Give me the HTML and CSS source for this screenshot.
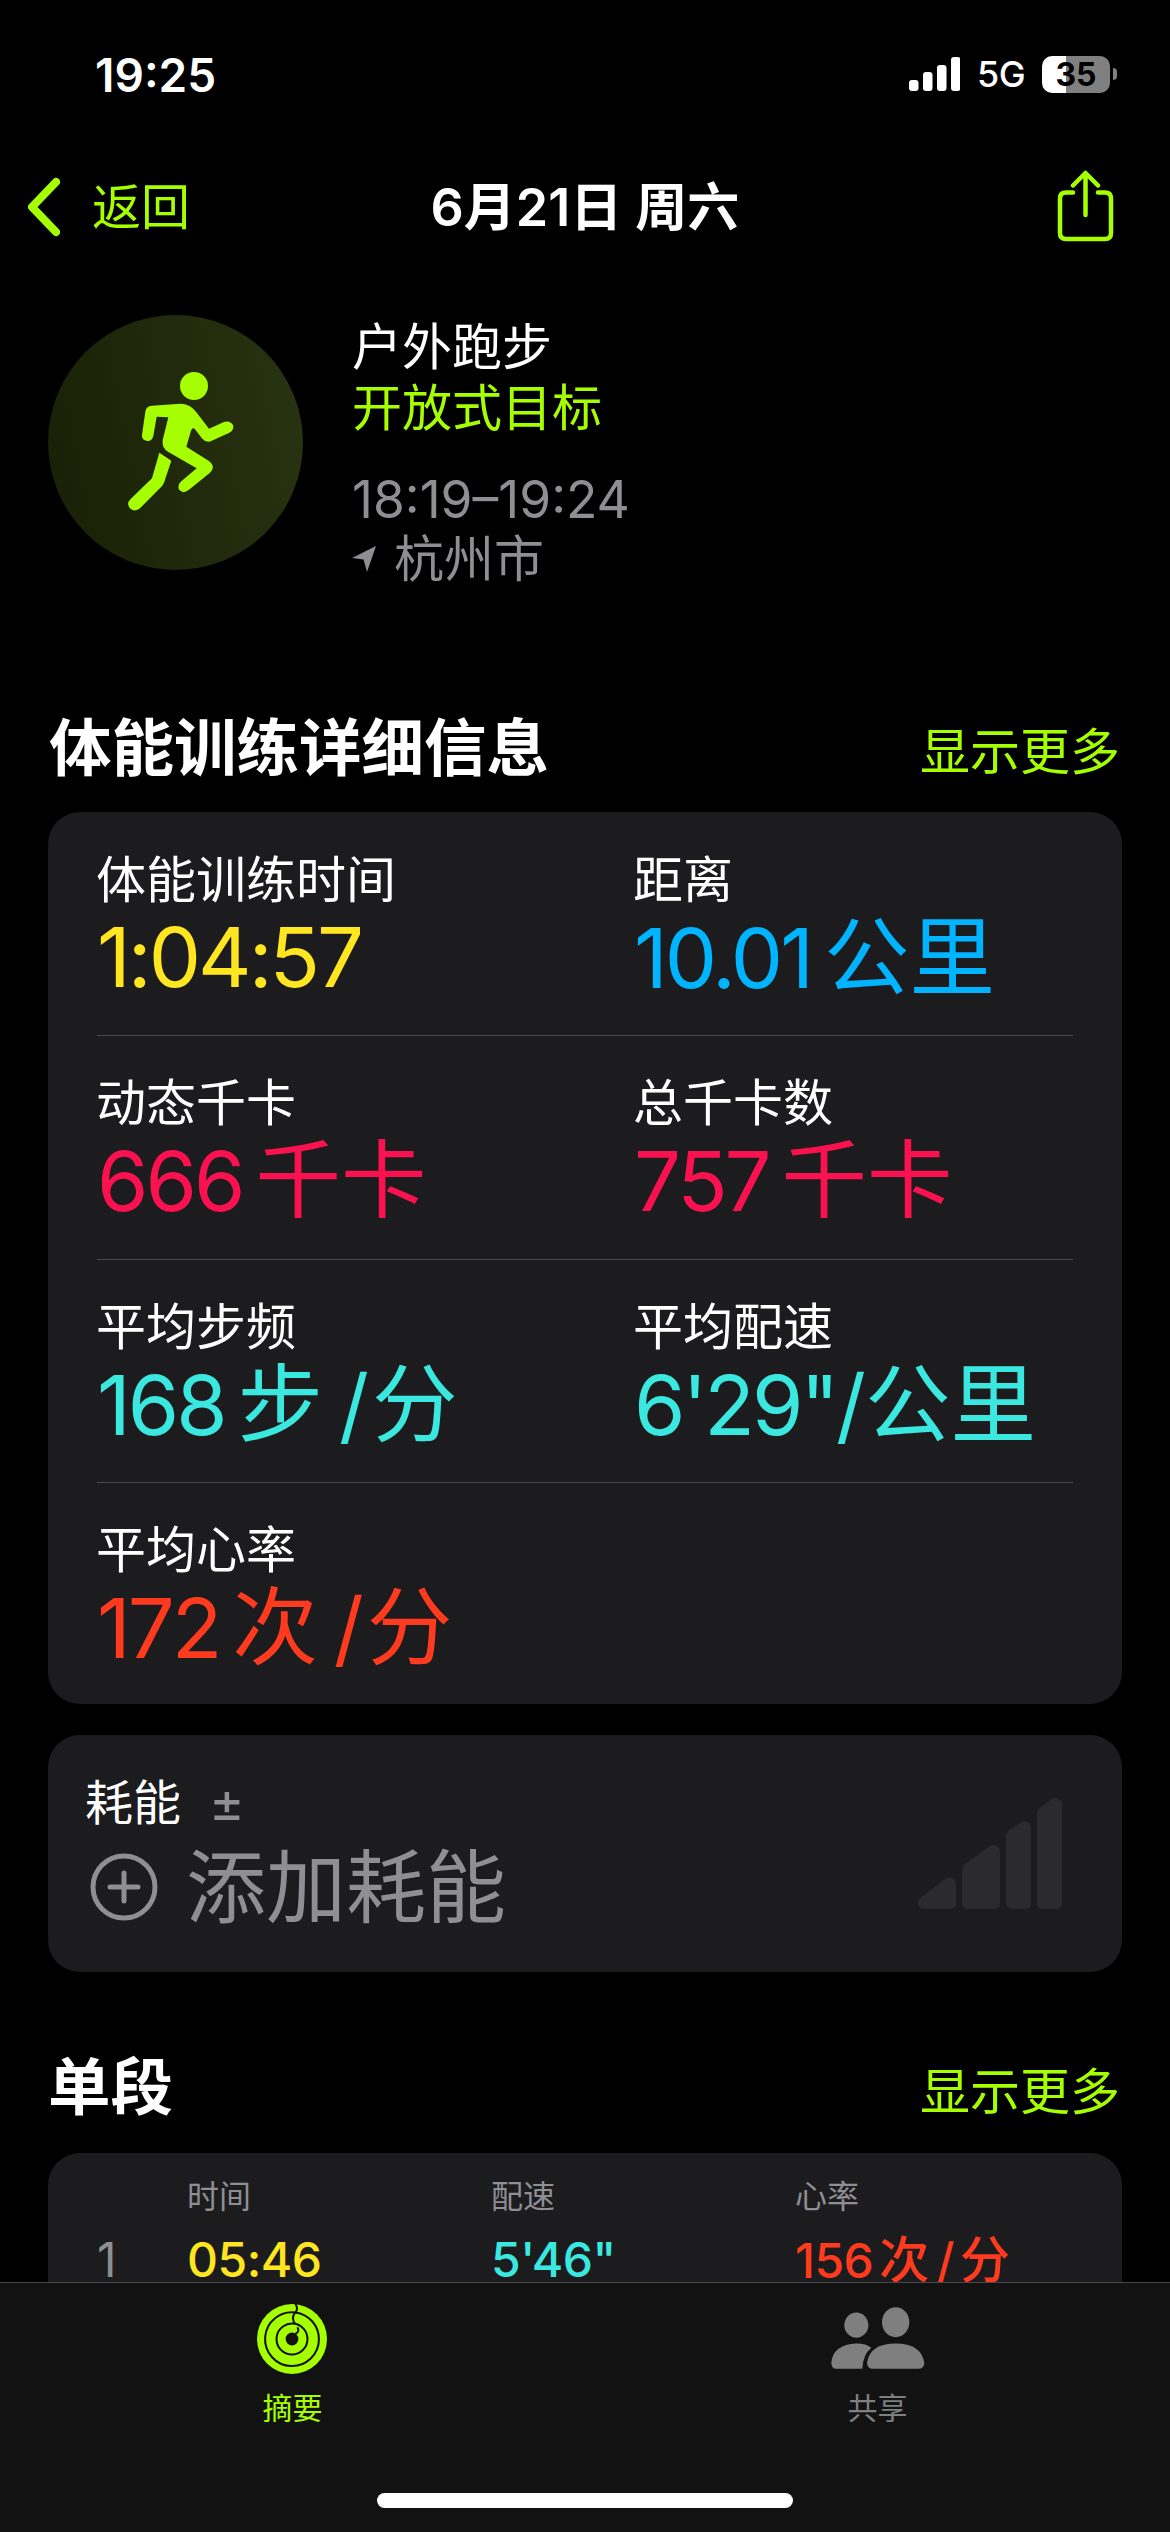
FILE: index.html
```html
<!DOCTYPE html>
<html lang="zh-CN">
<head>
<meta charset="utf-8">
<title>体能训练详细信息</title>
<link rel="stylesheet" href="styles.css">
</head>
<body>
<div class="page">
  <header class="status">
    <span class="clock">19:25</span>
    <div class="status-right">
      <svg class="signal" viewBox="0 0 51 34"><rect x="0" y="23" width="9.500" height="11" rx="3"/><rect x="14" y="15" width="9.500" height="19" rx="3"/><rect x="28" y="8" width="9.500" height="26" rx="3"/><rect x="42" y="0" width="9.500" height="34" rx="3"/></svg>
      <span class="net">5G</span>
      <div class="battery"><span class="battery-body">35</span><span class="battery-nub"></span></div>
    </div>
  </header>

  <nav class="nav">
    <div class="back">
      <svg class="chevron" viewBox="0 0 32 60"><path d="M28 5 L4 30 L28 55"/></svg>
      <span class="back-text">返回</span>
    </div>
    <div class="nav-title">6月21日 周六</div>
    <svg class="share" viewBox="0 0 59 75"><path d="M17 22.500 H10 Q4 22.500 4 28.500 V63 Q4 69 10 69 H49 Q55 69 55 63 V28.500 Q55 22.500 49 22.500 H42"/><path d="M29.500 45 V4 M17 15.500 L29.500 3 L42 15.500"/></svg>
  </nav>

  <section class="hero">
    <svg class="badge" viewBox="24 45 765 765">
      <defs><linearGradient id="badgeFill" x1="0" y1="0.5" x2="1" y2="0.3"><stop offset="0" stop-color="#1a2106"/><stop offset="1" stop-color="#283312"/></linearGradient></defs>
      <circle cx="406.500" cy="427.500" r="382.500" fill="url(#badgeFill)"/>
      <circle class="lime-fill" cx="462" cy="258" r="42"/>
      <path class="lime-fill" d="M306 405 L316 335 Q318 318 336 317 L420 311 Q450 311 468 335 L507 386 L552 366 Q570 360 579 375 Q584 390 568 398 L512 424 Q497 428 487 416 L465 388 Q458 380 453 392 L439 440 L508 484 Q528 500 510 518 L446 570 Q430 583 418 570 Q410 556 424 544 L470 505 L385 456 Q365 445 368 420 L385 352 L350 350 L340 408 Q336 424 322 423 Q304 420 306 405 Z"/>
      <path class="lime-fill" d="M358 458 L394 482 L372 548 Q368 558 358 566 L303 622 Q287 638 271 626 Q257 612 272 597 L336 535 Z"/>
    </svg>
    <div class="hero-text">
      <div class="hero-title">户外跑步</div>
      <div class="hero-goal">开放式目标</div>
      <div class="hero-time">18:19–19:24</div>
      <div class="hero-place">
        <svg class="pin" viewBox="0 0 24 26"><path d="M24 0 L15 26 L11.500 13.500 L0 12 Z"/></svg>
        <span>杭州市</span>
      </div>
    </div>
  </section>

  <div class="section-head">
    <h2>体能训练详细信息</h2>
    <span class="more">显示更多</span>
  </div>

  <section class="card metrics">
    <div class="metric"><div class="metric-label">体能训练时间</div><div class="metric-value yellow">1:04:57</div></div>
    <div class="metric"><div class="metric-label">距离</div><div class="metric-value blue">10.01<span class="unit">公里</span></div></div>
    <div class="metric"><div class="metric-label">动态千卡</div><div class="metric-value pink">666<span class="unit">千卡</span></div></div>
    <div class="metric"><div class="metric-label">总千卡数</div><div class="metric-value pink">757<span class="unit">千卡</span></div></div>
    <div class="metric"><div class="metric-label">平均步频</div><div class="metric-value cyan">168<span class="unit">步</span><span class="sep">/</span><span class="unit">分</span></div></div>
    <div class="metric"><div class="metric-label">平均配速</div><div class="metric-value cyan">6'29"<span class="sep sep-tight">/</span><span class="unit">公里</span></div></div>
    <div class="metric"><div class="metric-label">平均心率</div><div class="metric-value red">172<span class="unit">次</span><span class="sep">/</span><span class="unit">分</span></div></div>
    <div class="metric"></div>
  </section>

  <section class="card effort">
    <div class="effort-main">
      <div class="effort-label"><span>耗能</span><span class="plusminus">±</span></div>
      <div class="effort-add">
        <svg class="add" viewBox="0 0 68 68"><circle cx="34" cy="34" r="31"/><path d="M34 20 V48 M20 34 H48"/></svg>
        <span>添加耗能</span>
      </div>
    </div>
    <svg class="effort-bars" viewBox="0 0 540 420">
      <path d="M54 371 Q54 358 66 350 L135 298 Q150 288 160 296 Q168 302 168 316 V370 Q168 386 152 386 H70 Q54 386 54 371 Z"/>
      <path d="M186 272 Q186 260 196 252 L268 199 Q280 191 291 198 Q300 204 300 216 V368 Q300 386 282 386 H204 Q186 386 186 368 Z"/>
      <path d="M318 170 Q318 158 328 150 L362 128 Q375 120 385 128 Q393 134 393 145 V368 Q393 386 375 386 H336 Q318 386 318 368 Z"/>
      <path d="M411 102 Q411 90 421 83 L455 58 Q468 50 478 58 Q486 64 486 75 V368 Q486 386 468 386 H429 Q411 386 411 368 Z"/>
    </svg>
  </section>

  <div class="section-head section-head-second">
    <h2>单段</h2>
    <span class="more">显示更多</span>
  </div>

  <section class="card laps">
    <div class="laps-grid">
      <span></span>
      <span class="lap-head">时间</span>
      <span class="lap-head">配速</span>
      <span class="lap-head">心率</span>
      <span class="lap-num">1</span>
      <span class="lap-value yellow">05:46</span>
      <span class="lap-value cyan">5'46"</span>
      <span class="lap-value red">156<span class="lap-unit">次</span><span class="lap-sep">/</span><span class="lap-unit">分</span></span>
    </div>
  </section>

  <footer class="tabbar">
    <div class="tabs">
      <div class="tab tab-active">
        <svg class="rings" viewBox="168 74 208 208">
          <circle class="lime-fill" cx="272" cy="178" r="104"/>
          <g class="ring-gap">
            <path d="M282 99 A80 80 0 1 0 352 178 A80 80 0 0 0 282 99"/>
            <path d="M281 133 A46 46 0 1 0 318 178 A46 46 0 0 0 281 133"/>
            <path d="M282 74 Q292 88 282 99 M282 99 Q268 114 281 133"/>
            <path d="M288 143 Q296 155 282 163"/>
          </g>
          <circle cx="272" cy="178" r="19" class="ring-hole"/>
        </svg>
        <span>摘要</span>
      </div>
      <div class="tab">
        <svg class="people" viewBox="80 80 300 200">
          <ellipse cx="165" cy="137" rx="36" ry="38"/>
          <ellipse cx="283" cy="128" rx="41" ry="45"/>
          <path d="M90 250 Q95 195 165 192 Q195 192 210 205 Q185 225 183 268 L105 268 Q90 268 90 250 Z"/>
          <path d="M197 250 Q205 192 283 192 Q360 192 369 250 Q369 268 350 268 L215 268 Q197 268 197 250 Z"/>
        </svg>
        <span>共享</span>
      </div>
    </div>
    <div class="home-indicator"></div>
  </footer>
</div>
</body>
</html>
```

FILE: styles.css
```css
* { box-sizing: border-box; }
html, body { margin: 0; padding: 0; background: #000; }
body { font-family: Inter, "Noto Sans CJK SC", sans-serif; color: #fff; }

.page { position: relative; width: 1170px; height: 2532px; overflow: hidden; background: #000; padding: 0 48px; }

.lime-fill { fill: #a6ff00; }
.yellow { color: #ffe620; }
.blue { color: #00b4ff; }
.pink { color: #fa114f; }
.cyan { color: #3ae8e0; }
.red { color: #ff3b1f; }

/* status bar */
.status { height: 148px; display: flex; justify-content: space-between; align-items: flex-start; padding: 48px 5px 0 47px; }
.clock { font-size: 46px; font-weight: 600; line-height: 54px; }
.status-right { display: flex; align-items: center; height: 52px; }
.signal { width: 51px; height: 34px; fill: #fff; margin-right: 17px; }
.net { font-size: 36px; font-weight: 500; line-height: 44px; width: 65px; letter-spacing: -0.5px; }
.battery { display: flex; align-items: center; }
.battery-body { width: 68px; height: 37px; border-radius: 10px; background: linear-gradient(90deg, #fff 0 24px, #808080 24px); color: #000; font-size: 32px; font-weight: 700; line-height: 37px; text-align: center; }
.battery-nub { width: 4px; height: 12px; margin-left: 3px; background: #808080; border-radius: 0 6px 6px 0; }

/* nav */
.nav { height: 118px; margin: 0 -48px; display: grid; grid-template-columns: 1fr auto 1fr; align-items: center; }
.back { display: flex; align-items: center; margin-left: 28px; color: #a6ff00; font-size: 49px; line-height: 60px; }
.back-text { margin-top: 2px; }
.chevron { width: 32px; height: 60px; fill: none; stroke: #a6ff00; stroke-width: 8; stroke-linecap: round; stroke-linejoin: round; margin-right: 32px; }
.nav-title { margin-top: 2px; font-size: 52px; font-weight: 600; line-height: 60px; }
.share { width: 59px; height: 75px; justify-self: end; margin-right: 55px; fill: none; stroke: #a6ff00; stroke-width: 4.500; stroke-linecap: round; stroke-linejoin: round; }

/* hero */
.hero { display: flex; gap: 49px; margin-top: 49px; margin-bottom: 118px; }
.badge { width: 255px; height: 255px; flex: none; }
.hero-text { display: flex; flex-direction: column; padding-top: 2px; }
.hero-title { font-size: 50px; line-height: 60px; }
.hero-goal { font-size: 50px; line-height: 62px; color: #a6ff00; }
.hero-time { font-size: 51.500px; line-height: 60px; color: #8e8e93; margin-top: 30px; }
.hero-place { display: flex; align-items: center; gap: 18px; font-size: 50px; line-height: 60px; color: #8e8e93; }
.pin { width: 24px; height: 26px; fill: #8e8e93; }

/* section headings */
.section-head { display: flex; justify-content: space-between; align-items: flex-start; height: 80px; margin-bottom: 25px; padding: 0 2px 0 1px; }
.section-head h2 { margin: 1px 0 0; font-size: 62.500px; font-weight: 700; line-height: 80px; }
.more { margin-top: 15px; color: #a6ff00; font-size: 50px; line-height: 60px; }
.section-head-second { margin-top: 75px; margin-bottom: 26px; }
.section-head-second h2 { margin: 0 0 0 -1px; }

/* cards */
.card { background: #1c1c1e; border-radius: 32px; }

.metrics { height: 892px; padding: 0 49px; display: grid; grid-template-columns: 537px 439px; grid-auto-rows: 223.250px; align-content: start; }
.metric { padding-top: 37px; border-top: 1px solid #48484a; }
.metric:nth-child(-n+2) { border-top: 0; padding-top: 38px; }
.metric-label { margin-left: -1px; font-size: 50px; line-height: 60px; }
.metric-value { font-size: 83px; font-weight: 400; letter-spacing: -3px; line-height: 96px; margin-top: -1px; white-space: nowrap; }
.unit { font-size: 85.500px; font-weight: 400; letter-spacing: 0; margin-left: 13px; }
.sep { margin: 0 6px 0 16px; font-weight: 400; }
.sep-tight { margin-left: 0; margin-right: 2px; }
.sep + .unit { margin-left: 0; }

.effort { margin-top: 31px; height: 237px; padding: 38px 42px 0 37px; display: flex; justify-content: space-between; align-items: flex-start; }
.effort-label { display: flex; align-items: center; gap: 28px; font-size: 48px; line-height: 60px; }
.plusminus { color: #8e8e93; font-size: 54px; font-weight: 400; }
.effort-add { display: flex; align-items: center; gap: 28px; margin-top: 6px; padding-left: 5px; color: #8e8e93; font-size: 80px; line-height: 96px; font-weight: 400; }
.add { width: 68px; height: 68px; fill: none; stroke: #8e8e93; stroke-width: 5; stroke-linecap: round; }
.effort-bars { width: 180px; height: 140px; margin-top: 7px; fill: #2b2b2d; }

.laps { height: 400px; padding: 22px 0 0 49px; }
.laps-grid { display: grid; grid-template-columns: 90px 304px 304px 1fr; grid-template-rows: 44px 64px; row-gap: 9px; align-items: center; }
.lap-head { font-size: 32px; line-height: 44px; color: #8e8e93; }
.lap-num { font-size: 48px; line-height: 64px; color: #8e8e93; }
.lap-value { font-size: 48px; font-weight: 500; letter-spacing: -0.500px; line-height: 64px; white-space: nowrap; }
.lap-unit { font-size: 50px; margin-left: 6px; }
.lap-sep { margin-left: 8px; }
.lap-sep + .lap-unit { margin-left: 6px; }

/* tab bar */
.tabbar { position: absolute; left: 0; right: 0; bottom: 0; height: 250px; background: #121212; border-top: 1px solid #48484a; }
.tabs { display: flex; }
.tab { flex: 1; display: flex; flex-direction: column; align-items: center; color: #7f7f7f; font-size: 30px; line-height: 40px; }
.tab-active { color: #a6ff00; }
.rings { width: 70px; height: 70px; margin: 21px 2px 14px 0; }
.ring-gap { fill: none; stroke: #121212; stroke-width: 6; }
.ring-hole { fill: #121212; }
.people { width: 100px; height: 67px; margin-top: 23px; margin-bottom: 15px; fill: #7f7f7f; }
.home-indicator { position: absolute; left: 377px; bottom: 24px; width: 416px; height: 15px; border-radius: 8px; background: #fff; }
```
